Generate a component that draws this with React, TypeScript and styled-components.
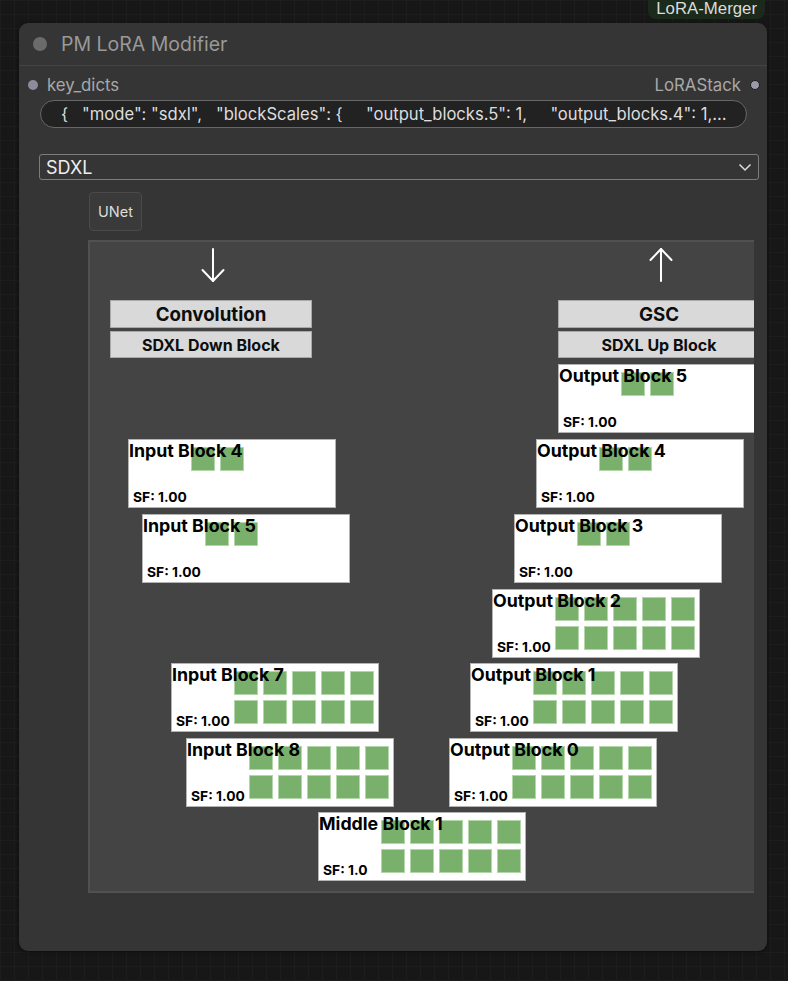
import React from 'react';
import styled, { createGlobalStyle } from 'styled-components';

const GlobalStyle = createGlobalStyle`
  html, body {
    margin: 0;
    padding: 0;
  }
  body {
    width: 788px;
    height: 981px;
    overflow: hidden;
    font-family: Inter, "Noto Sans", "Liberation Sans", sans-serif;
    background-color: #171717;
    background-image:
      linear-gradient(to right, #1d1d1d 1px, transparent 1px),
      linear-gradient(to bottom, #1d1d1d 1px, transparent 1px);
    background-size: 14px 14px;
  }
`;

const Page = styled.div`
  display: flex;
  flex-direction: column;
`;

const BadgeRow = styled.div`
  height: 23px;
  display: flex;
  justify-content: flex-end;
  align-items: flex-start;
  padding-right: 23px;
`;

const Badge = styled.div`
  height: 19px;
  padding: 0 8px;
  background: #1b2a1a;
  border-radius: 0 0 8px 8px;
  color: #dcdcdc;
  font-size: 16.8px;
  line-height: 18px;
  font-family: "Liberation Sans", Arial, sans-serif;
`;

const Node = styled.div`
  margin-left: 19px;
  width: 748px;
  height: 928px;
  background: #353535;
  border-radius: 9px;
  box-shadow: 0 1px 4px rgba(0, 0, 0, 0.5);
  display: flex;
  flex-direction: column;
  overflow: hidden;
`;

const TitleBar = styled.div`
  height: 42px;
  display: flex;
  align-items: center;
  gap: 14px;
  padding-left: 14px;
  border-bottom: 1px solid #444;
`;

const TitleDot = styled.div`
  width: 14px;
  height: 14px;
  border-radius: 50%;
  background: #6b6b6b;
`;

const Title = styled.div`
  color: #999;
  font-size: 19.5px;
`;

const SlotRow = styled.div`
  margin-top: 9px;
  height: 20px;
  display: flex;
  align-items: center;
  justify-content: space-between;
  padding: 0 7px 0 9px;
`;

const Slot = styled.div`
  display: flex;
  align-items: center;
  gap: 9px;
  color: #a8a8a8;
  font-size: 16.8px;
`;

const SlotDot = styled.div<{ $output?: boolean }>`
  width: 10px;
  height: 10px;
  border-radius: 50%;
  box-sizing: border-box;
  background: ${p => (p.$output ? '#9a9aa8' : '#8c8c9c')};
  border: ${p => (p.$output ? '1.5px solid #1c1c1c' : 'none')};
`;

const TextWidget = styled.div`
  margin: 5px 20px 0 21px;
  height: 28px;
  box-sizing: border-box;
  border: 1px solid #676767;
  border-radius: 14px;
  background: #222;
  color: #ddd;
  font-size: 16.6px;
  line-height: 26px;
  padding: 0 18px 0 20px;
  white-space: pre;
  overflow: hidden;
`;

const Select = styled.div`
  margin: 26px 8px 0 20px;
  height: 26px;
  box-sizing: border-box;
  border: 1px solid #7d7d7d;
  border-radius: 3px;
  display: flex;
  align-items: center;
  justify-content: space-between;
  padding: 0 6px;
  color: #eee;
  font-size: 18px;
`;

const UNetButton = styled.div`
  margin: 12px 0 0 70px;
  width: 53px;
  height: 39px;
  box-sizing: border-box;
  border: 1px solid #4a4a4a;
  border-radius: 4px;
  background: #3a3a3a;
  color: #ddd;
  font-size: 14.5px;
  display: flex;
  align-items: center;
  justify-content: center;
`;

const Panel = styled.div`
  position: relative;
  margin: 9px 0 0 69px;
  width: 666px;
  height: 653px;
  box-sizing: border-box;
  background: #444;
  border: 2px solid #515151;
  border-right: none;
  overflow: hidden;
`;

const HeaderRow = styled.div`
  display: flex;
  gap: 246px;
  padding-left: 20px;
  width: 900px;
`;

const Column = styled.div`
  width: 202px;
  flex-shrink: 0;
  display: flex;
  flex-direction: column;
  gap: 3px;
`;

const ArrowCell = styled.div`
  height: 55px;
  display: flex;
  justify-content: center;
  align-items: flex-start;
  padding-top: 5px;
  padding-left: 4px;
  box-sizing: border-box;
`;

const Header = styled.div<{ $small?: boolean }>`
  height: ${p => (p.$small ? 27 : 28)}px;
  box-sizing: border-box;
  background: #d9d9d9;
  border: 1px solid #a9a9a9;
  display: flex;
  align-items: center;
  justify-content: center;
  font-weight: 700;
  color: #0d0d0d;
  font-size: ${p => (p.$small ? 16 : 18.7)}px;
`;

const Block = styled.div<{ $x: number; $y: number }>`
  position: absolute;
  left: ${p => p.$x}px;
  top: ${p => p.$y}px;
  width: 208px;
  height: 69px;
  box-sizing: border-box;
  background: #fff;
  border: 1px solid #b3b3b3;
`;

const BlockTitle = styled.div`
  position: absolute;
  left: 0;
  top: 1px;
  z-index: 1;
  font-weight: 700;
  font-size: 17.8px;
  line-height: 20px;
  color: #000;
  white-space: nowrap;
`;

const Cells = styled.div`
  position: absolute;
  left: 62px;
  top: 7px;
  display: grid;
  grid-template-columns: repeat(5, 24px);
  gap: 5px;
`;

const Cell = styled.div`
  width: 24px;
  height: 24px;
  box-sizing: border-box;
  background: #78b06c;
  border: 1px solid #b4d6ab;
`;

const ScaleLabel = styled.div`
  position: absolute;
  left: 4px;
  bottom: 2px;
  font-weight: 700;
  font-size: 13.8px;
  color: #000;
`;

const Arrow = ({ up }: { up?: boolean }) => (
  <svg width="24" height="36" viewBox="0 0 24 36">
    <g fill="none" stroke="#fff" strokeWidth="2" strokeLinecap="round" strokeLinejoin="round">
      <line x1="12" y1="2" x2="12" y2="34" />
      {up ? <polyline points="1.5,13 12,2 22.5,13" /> : <polyline points="1.5,23 12,34 22.5,23" />}
    </g>
  </svg>
);

const Chevron = () => (
  <svg width="14" height="9" viewBox="0 0 14 9">
    <polyline points="1.5,1.5 7,7 12.5,1.5" fill="none" stroke="#ddd" strokeWidth="1.5" />
  </svg>
);

const JSON_TEXT = '{   "mode": "sdxl",   "blockScales": {     "output_blocks.5": 1,     "output_blocks.4": 1,…';

const BLOCKS = [
  { name: 'Output Block 5', x: 468, y: 122, cells: 2, sf: '1.00' },
  { name: 'Input Block 4', x: 38, y: 197, cells: 2, sf: '1.00' },
  { name: 'Output Block 4', x: 446, y: 197, cells: 2, sf: '1.00' },
  { name: 'Input Block 5', x: 52, y: 272, cells: 2, sf: '1.00' },
  { name: 'Output Block 3', x: 424, y: 272, cells: 2, sf: '1.00' },
  { name: 'Output Block 2', x: 402, y: 347, cells: 10, sf: '1.00' },
  { name: 'Input Block 7', x: 81, y: 421, cells: 10, sf: '1.00' },
  { name: 'Output Block 1', x: 380, y: 421, cells: 10, sf: '1.00' },
  { name: 'Input Block 8', x: 96, y: 496, cells: 10, sf: '1.00' },
  { name: 'Output Block 0', x: 359, y: 496, cells: 10, sf: '1.00' },
  { name: 'Middle Block 1', x: 228, y: 570, cells: 10, sf: '1.0' },
];

export default function App() {
  return (
    <Page>
      <GlobalStyle />
      <BadgeRow>
        <Badge>LoRA-Merger</Badge>
      </BadgeRow>
      <Node>
        <TitleBar>
          <TitleDot />
          <Title>PM LoRA Modifier</Title>
        </TitleBar>
        <SlotRow>
          <Slot>
            <SlotDot />
            key_dicts
          </Slot>
          <Slot>
            LoRAStack
            <SlotDot $output />
          </Slot>
        </SlotRow>
        <TextWidget>{JSON_TEXT}</TextWidget>
        <Select>
          SDXL
          <Chevron />
        </Select>
        <UNetButton>UNet</UNetButton>
        <Panel>
          <HeaderRow>
            <Column>
              <ArrowCell>
                <Arrow />
              </ArrowCell>
              <Header>Convolution</Header>
              <Header $small>SDXL Down Block</Header>
            </Column>
            <Column>
              <ArrowCell>
                <Arrow up />
              </ArrowCell>
              <Header>GSC</Header>
              <Header $small>SDXL Up Block</Header>
            </Column>
          </HeaderRow>
          {BLOCKS.map(b => (
            <Block key={b.name} $x={b.x} $y={b.y}>
              <BlockTitle>{b.name}</BlockTitle>
              <Cells>
                {Array.from({ length: b.cells }).map((_, i) => (
                  <Cell key={i} />
                ))}
              </Cells>
              <ScaleLabel>SF: {b.sf}</ScaleLabel>
            </Block>
          ))}
        </Panel>
      </Node>
    </Page>
  );
}
